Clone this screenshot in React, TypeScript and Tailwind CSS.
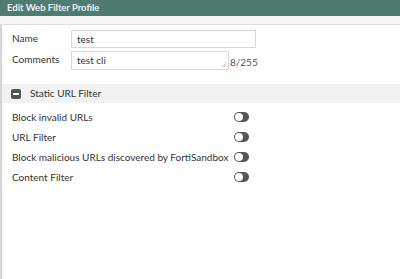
import { ReactNode } from "react";

function Toggle() {
    return (
        <span className="inline-flex items-center w-[15px] h-[10px] rounded-full bg-[#555] p-[1px]">
            <span className="w-[8px] h-[8px] rounded-full bg-white" />
        </span>
    );
}

function Row({ label }: { label: string }) {
    return (
        <div className="flex items-center h-[20px]">
            <span className="w-[222px] whitespace-nowrap">{label}</span>
            <Toggle />
        </div>
    );
}

function Field({ label, children }: { label: string; children: ReactNode }) {
    return (
        <div className="flex items-start">
            <span className="w-[59px] pt-[1px]">{label}</span>
            {children}
        </div>
    );
}

export default function App() {
    const rows = [
        "Block invalid URLs",
        "URL Filter",
        "Block malicious URLs discovered by FortiSandbox",
        "Content Filter",
    ];

    return (
        <div className="w-[400px] h-[279px] bg-white text-[10px] text-[#333] font-['Lato',sans-serif] overflow-hidden flex flex-col">
            <div className="h-[16px] bg-[#4f7b73] text-white text-[9.5px] font-semibold leading-[16px] px-[7px]">
                Edit Web Filter Profile
            </div>
            <div className="h-[9px] bg-[#f6f6f6] border-b border-[#dedede]" />
            <div className="flex-1 border-l-2 border-[#d4d4d4]">
                <div className="pl-[10px] pt-[5px] flex flex-col gap-[3px]">
                    <Field label="Name">
                        <div className="w-[185px] h-[18px] border border-[#d9d9d9] px-[5px] leading-[16px]">test</div>
                    </Field>
                    <Field label="Comments">
                        <div className="w-[158px] h-[19px] border border-[#d9d9d9] px-[5px] leading-[16px] relative">
                            test cli
                            <svg className="absolute right-[1px] bottom-[1px]" width="6" height="6" viewBox="0 0 6 6">
                                <path d="M5 1L1 5M5 3L3 5" stroke="#aaa" strokeWidth="0.8" />
                            </svg>
                        </div>
                        <span className="pt-[4px] pl-[1px] text-[#555]">8/255</span>
                    </Field>
                </div>
                <div className="mt-[14px] h-[19px] bg-[#f2f2f2] flex items-center pl-[9px] gap-[9px]">
                    <span className="w-[10px] h-[10px] rounded-[2px] bg-[#555] flex items-center justify-center">
                        <span className="w-[6px] h-[2px] bg-white" />
                    </span>
                    <span>Static URL Filter</span>
                </div>
                <div className="pl-[10px] pt-[4px]">
                    {rows.map((r) => (
                        <Row key={r} label={r} />
                    ))}
                </div>
            </div>
        </div>
    );
}
